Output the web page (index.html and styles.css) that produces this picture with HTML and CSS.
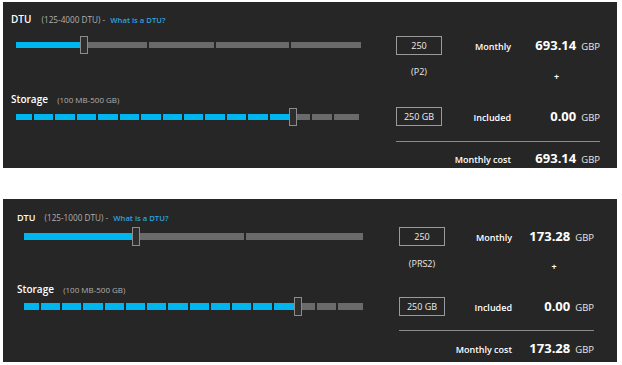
FILE: index.html
```html
<!DOCTYPE html>
<html lang="en">
<head>
    <meta charset="UTF-8">
    <meta name="viewport" content="width=device-width, initial-scale=1.0">
    <title>Pricing tier</title>
    <link rel="stylesheet" href="styles.css">
</head>
<body>

<!-- premium tier -->
<div class="panel premium">
    <div class="sliders">
        <div class="head">
            <span class="name">DTU</span>
            <span class="range">(125-4000 DTU) -</span>
            <a class="help" href="#">What is a DTU?</a>
        </div>
        <div class="track dtu">
            <span class="seg on" style="flex-basis: 66px"></span>
            <span class="seg" style="flex-basis: 63px"></span>
            <span class="seg" style="flex-basis: 65px"></span>
            <span class="seg" style="flex-basis: 73px"></span>
            <span class="seg" style="flex-basis: 70px"></span>
            <span class="thumb" style="left: 64px"></span>
        </div>
        <div class="head storage">
            <span class="name">Storage</span>
            <span class="range">(100 MB-500 GB)</span>
        </div>
        <div class="track blocks">
            <span class="seg on"></span><span class="seg on"></span><span class="seg on"></span><span class="seg on"></span>
            <span class="seg on"></span><span class="seg on"></span><span class="seg on"></span><span class="seg on"></span>
            <span class="seg on"></span><span class="seg on"></span><span class="seg on"></span><span class="seg on"></span>
            <span class="seg on"></span><span class="seg"></span><span class="seg"></span><span class="seg"></span>
            <span class="thumb" style="left: 273px"></span>
        </div>
    </div>

    <div class="pricing">
        <div class="box">250</div>
        <div class="label">Monthly</div>
        <div class="amount"><b>693.14</b><span>GBP</span></div>

        <div class="tier">(P2)</div>
        <div></div>
        <div class="plus">+</div>

        <div class="box">250 GB</div>
        <div class="label">Included</div>
        <div class="amount"><b>0.00</b><span>GBP</span></div>

        <div class="rule"></div>

        <div></div>
        <div class="label total">Monthly cost</div>
        <div class="amount"><b>693.14</b><span>GBP</span></div>
    </div>
</div>

<!-- premium rs tier -->
<div class="panel premium-rs">
    <div class="sliders">
        <div class="head">
            <span class="name">DTU</span>
            <span class="range">(125-1000 DTU) -</span>
            <a class="help" href="#">What is a DTU?</a>
        </div>
        <div class="track dtu">
            <span class="seg on" style="flex-basis: 111px"></span>
            <span class="seg" style="flex-basis: 107px"></span>
            <span class="seg" style="flex-basis: 117px"></span>
            <span class="thumb" style="left: 108px"></span>
        </div>
        <div class="head storage">
            <span class="name">Storage</span>
            <span class="range">(100 MB-500 GB)</span>
        </div>
        <div class="track blocks">
            <span class="seg on"></span><span class="seg on"></span><span class="seg on"></span><span class="seg on"></span>
            <span class="seg on"></span><span class="seg on"></span><span class="seg on"></span><span class="seg on"></span>
            <span class="seg on"></span><span class="seg on"></span><span class="seg on"></span><span class="seg on"></span>
            <span class="seg on"></span><span class="seg"></span><span class="seg"></span><span class="seg"></span>
            <span class="thumb" style="left: 270px"></span>
        </div>
    </div>

    <div class="pricing">
        <div class="box">250</div>
        <div class="label">Monthly</div>
        <div class="amount"><b>173.28</b><span>GBP</span></div>

        <div class="tier">(PRS2)</div>
        <div></div>
        <div class="plus">+</div>

        <div class="box">250 GB</div>
        <div class="label">Included</div>
        <div class="amount"><b>0.00</b><span>GBP</span></div>

        <div class="rule"></div>

        <div></div>
        <div class="label total">Monthly cost</div>
        <div class="amount"><b>173.28</b><span>GBP</span></div>
    </div>
</div>

</body>
</html>
```

FILE: styles.css
```css
body {
    font-family: 'Open Sans', sans-serif;
    background-color: #fff;
    margin: 0;
    padding: 2px 0 0 3px;
    color: #fff;
}

.panel {
    display: flex;
    width: 614px;
    height: 166px;
    background-color: #262626;
}

.panel + .panel {
    margin-top: 31px;
    height: 163px;
}

/* left column: sliders */
.sliders {
    box-sizing: border-box;
    width: 393px;
    padding: 9px 0 0 8px;
}

.head {
    height: 12px;
    line-height: 12px;
    white-space: nowrap;
}

.head .name {
    font-size: 10px;
    font-weight: 600;
    margin-right: 6px;
}

.head .range {
    font-size: 8.2px;
    color: #b0b0b0;
}

.head .help {
    font-size: 7.7px;
    font-weight: 600;
    color: #2fa3df;
    text-decoration: none;
    margin-left: 1px;
}

.head.storage {
    margin-top: 36px;
    height: 14px;
    line-height: 14px;
}

.head.storage .name {
    font-size: 10px;
    margin-right: 5px;
}

.head.storage .range {
    font-size: 8px;
}

.track {
    position: relative;
    display: flex;
    align-items: center;
    gap: 2px;
    width: 345px;
    height: 18px;
    margin: 13px 0 0 5px;
}

.track .seg {
    display: block;
    height: 6px;
    background-color: #6a6a6a;
}

.track .seg.on {
    background-color: #00b6ef;
}

.dtu .seg {
    flex: 0 1 auto;
}

.dtu .seg:last-of-type {
    flex-grow: 1;
}

.blocks {
    width: 343px;
    margin-top: 4px;
}

.blocks .seg {
    flex: 1 1 0;
}

.blocks .seg:first-child {
    flex: 0 0 16px;
}

.blocks .seg:nth-child(16) {
    flex: 0 0 25px;
}

.thumb {
    position: absolute;
    top: 0;
    width: 6px;
    height: 16px;
    border: 1px solid #8c8c8c;
    background-color: #2e2e2e;
}

/* right column: prices */
.pricing {
    display: grid;
    grid-template-columns: 46px 69px 89px;
    grid-template-rows: 19px 52px 19px auto auto;
    align-content: start;
    width: 208px;
    padding-top: 34px;
    font-size: 9px;
}

.box {
    box-sizing: border-box;
    border: 1px solid #9a9a9a;
    text-align: center;
    line-height: 17px;
    color: #ececec;
}

.label {
    text-align: right;
    font-weight: 600;
    line-height: 19px;
    padding-top: 1px;
}

.amount {
    display: flex;
    justify-content: flex-end;
    align-items: baseline;
    line-height: 19px;
}

.amount b {
    font-size: 13px;
    font-weight: 700;
}

.amount span {
    font-size: 9.5px;
    color: #e6e6e6;
    margin-left: 5px;
}

.tier {
    text-align: center;
    line-height: 12px;
    margin-top: 11px;
    color: #e6e6e6;
}

.plus {
    text-align: center;
    font-weight: 700;
    margin-top: 16px;
    line-height: 12px;
    padding-left: 2px;
}

.rule {
    grid-column: 1 / -1;
    height: 1px;
    margin-top: 15px;
    background-color: #8a8a8a;
}

.total {
    margin-top: 7px;
}

.total + .amount {
    margin-top: 7px;
}

/* second panel is a touch shifted */
.premium-rs .sliders {
    width: 396px;
    padding: 10px 0 0 14px;
}

.premium-rs .head .name {
    font-size: 9px;
    margin-right: 5px;
}

.premium-rs .head.storage .name {
    font-size: 10px;
}

.premium-rs .track {
    width: 339px;
    height: 19px;
    margin-top: 6px;
    margin-left: 7px;
}

.premium-rs .track .seg {
    height: 7px;
}

.premium-rs .head.storage {
    margin-top: 34px;
}

.premium-rs .blocks {
    margin-top: 3px;
}

.premium-rs .blocks .seg:first-child {
    flex-basis: 15px;
}

.premium-rs .thumb {
    height: 17px;
}

.premium-rs .pricing {
    grid-template-columns: 46px 67px 82px;
    grid-template-rows: 19px 51px 19px auto auto;
    width: 205px;
    padding-top: 28px;
}

.premium-rs .tier {
    margin-top: 12px;
}

.premium-rs .plus {
    margin-top: 15px;
}

.premium-rs .rule {
    margin-top: 14px;
}

.premium-rs .total,
.premium-rs .total + .amount {
    margin-top: 8px;
}
```
